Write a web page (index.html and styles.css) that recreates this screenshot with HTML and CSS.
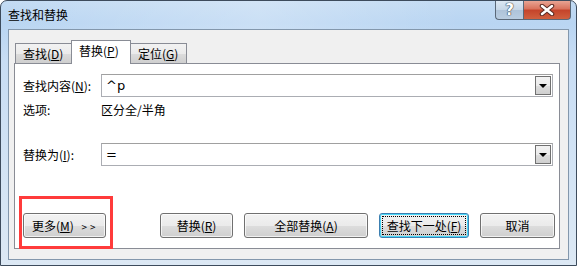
FILE: index.html
```html
<!DOCTYPE html>
<html lang="zh-CN">
<head>
    <meta charset="UTF-8">
    <title>查找和替换</title>
    <link rel="stylesheet" href="styles.css">
</head>
<body>
    <div class="window">
        <div class="titlebar">
            <span class="title">查找和替换</span>
            <div class="controls">
                <div class="ctl help">?</div>
                <div class="ctl close">
                    <svg width="16" height="12" viewBox="0 0 16 12">
                        <path d="M3 2 L13 10 M13 2 L3 10" stroke="#5a2a22" stroke-width="4.5" stroke-linecap="round"/>
                        <path d="M3 2 L13 10 M13 2 L3 10" stroke="#ffffff" stroke-width="2.5" stroke-linecap="round"/>
                    </svg>
                </div>
            </div>
        </div>

        <div class="client">
            <div class="tabs">
                <div class="tab first">查找(<u>D</u>)</div>
                <div class="tab active">替换(<u>P</u>)</div>
                <div class="tab">定位(<u>G</u>)</div>
            </div>

            <div class="panel">
                <div class="row">
                    <label class="label">查找内容(<u>N</u>):</label>
                    <div class="combo">
                        <span class="value">^p</span>
                        <span class="drop"><i></i></span>
                    </div>
                </div>
                <div class="row options">
                    <span class="label">选项:</span>
                    <span class="opt-text">区分全/半角</span>
                </div>
                <div class="row replace">
                    <label class="label">替换为(<u>I</u>):</label>
                    <div class="combo">
                        <span class="value">=</span>
                        <span class="drop"><i></i></span>
                    </div>
                </div>

                <div class="buttons">
                    <button class="btn more">更多(<u>M</u>) <span class="arrows">&gt;&gt;</span></button>
                    <button class="btn replace-one">替换(<u>R</u>)</button>
                    <button class="btn replace-all">全部替换(<u>A</u>)</button>
                    <button class="btn default"><span class="focus">查找下一处(<u>F</u>)</span></button>
                    <button class="btn cancel">取消</button>
                </div>
            </div>
        </div>
    </div>
</body>
</html>
```

FILE: styles.css
```css
html, body {
    margin: 0;
    padding: 0;
}

body {
    font-family: "Noto Sans CJK SC", "Noto Sans", sans-serif;
    font-size: 12px;
    color: #000;
    width: 577px;
    height: 266px;
    overflow: hidden;
    background: #fff;
}

.window {
    width: 575px;
    height: 264px;
    border: 1px solid #3d4b5c;
    border-radius: 7px 7px 0 0;
    background: linear-gradient(to bottom, #c3dbf3 0px, #b9d5f2 22px, #c8ddf4 60px, #d6e5f4 200px, #dce8f4 264px);
}

.titlebar {
    height: 28px;
    display: flex;
    justify-content: space-between;
    background: linear-gradient(to right, rgba(255,255,255,0) 0%, rgba(255,255,255,0.25) 45%, rgba(255,255,255,0) 80%);
    border-radius: 7px 7px 0 0;
}

.title {
    padding: 5px 0 0 7px;
    line-height: 18px;
    font-size: 12px;
}

.controls {
    display: flex;
    margin-right: 5px;
    height: 19px;
}

.ctl {
    height: 18px;
    border: 1px solid #5a6878;
    border-top: none;
    display: flex;
    align-items: center;
    justify-content: center;
}

.help {
    width: 27px;
    border-radius: 0 0 0 4px;
    border-right: none;
    background: linear-gradient(to bottom, #dce8f3 0%, #c6d6e6 50%, #aec3d9 51%, #b9cde1 100%);
    color: #fff;
    font-family: "DejaVu Sans", sans-serif;
    font-weight: bold;
    font-size: 15px;
    text-shadow: 0 0 1px #35424f, 0 0 1px #35424f, 0 0 1px #35424f;
}

.close {
    width: 46px;
    border-radius: 0 0 4px 0;
    background: linear-gradient(to bottom, #e8a493 0%, #d8715b 45%, #c4432a 50%, #d0603f 100%);
}

.client {
    margin: 0 7px;
    height: 229px;
    border: 1px solid #8397ac;
    background: #f0f0f0;
    display: flex;
    flex-direction: column;
}

.tabs {
    display: flex;
    align-items: flex-end;
    margin-top: 10px;
    padding-left: 6px;
    height: 23px;
}

.tab {
    height: 20px;
    line-height: 20px;
    padding: 0 7px;
    border: 1px solid #898c95;
    border-bottom: none;
    margin-left: -1px;
    background: linear-gradient(to bottom, #f2f2f2 0%, #ebebeb 50%, #dddddd 51%, #cfcfcf 100%);
    box-sizing: border-box;
    font-size: 12px;
}

.tab.first {
    margin-left: 0;
    width: 57px;
}

.tab.active {
    height: 24px;
    line-height: 20px;
    background: #fff;
    width: 60px;
    position: relative;
    top: 1px;
    z-index: 1;
}

.tab:last-child {
    width: 57px;
}

.panel {
    margin: 0 8px 0 5px;
    height: 186px;
    background: #fff;
    border: 1px solid #898c95;
    box-sizing: border-box;
    display: flex;
    flex-direction: column;
    padding: 10px 6px 0 8px;
}

.row {
    display: flex;
    align-items: center;
}

.label {
    width: 78px;
    flex: none;
}

.combo {
    flex: 1;
    height: 23px;
    border: 1px solid #abadb3;
    border-top-color: #a0a0a0;
    box-sizing: border-box;
    display: flex;
    align-items: center;
    justify-content: space-between;
}

.value {
    padding-left: 4px;
    font-family: "DejaVu Sans", sans-serif;
    font-size: 13px;
}

.drop {
    width: 16px;
    height: 19px;
    margin-right: 1px;
    border: 1px solid #707070;
    box-sizing: border-box;
    background: linear-gradient(to bottom, #f2f2f2 0%, #ebebeb 50%, #dddddd 51%, #cfcfcf 100%);
    display: flex;
    align-items: center;
    justify-content: center;
}

.drop i {
    display: block;
    width: 0;
    height: 0;
    border-left: 4px solid transparent;
    border-right: 4px solid transparent;
    border-top: 4px solid #000;
}

.options {
    margin-top: 4px;
    height: 16px;
}

.replace {
    margin-top: 26px;
}

.buttons {
    display: flex;
    align-items: center;
    margin-top: 47px;
}

.btn {
    height: 25px;
    border: 1px solid #707070;
    border-radius: 3px;
    background: linear-gradient(to bottom, #f2f2f2 0%, #ebebeb 50%, #dddddd 51%, #cfcfcf 100%);
    font-family: "Noto Sans CJK SC", "Noto Sans", sans-serif;
    font-size: 12px;
    color: #000;
    padding: 0;
    box-sizing: border-box;
    box-shadow: inset 0 0 0 1px rgba(255,255,255,0.7);
    flex: none;
}

.more {
    width: 83px;
    margin-right: 54px;
    text-align: left;
    padding-left: 8px;
    position: relative;
}

/* red highlight box drawn over the "more" button */
.more::after {
    content: "";
    position: absolute;
    left: -5px;
    top: -18px;
    width: 88px;
    height: 47px;
    border: 3px solid #ff3b3b;
}

.arrows {
    letter-spacing: 3px;
    margin-left: 5px;
    font-size: 10px;
}

.replace-one {
    width: 73px;
    margin-right: 11px;
}

.replace-all {
    width: 124px;
    margin-right: 11px;
}

.default {
    width: 90px;
    margin-right: 11px;
    border-color: #3c7fb1;
    box-shadow: inset 0 0 0 1px #48d8f8;
    padding: 2px;
}

.focus {
    display: flex;
    align-items: center;
    justify-content: center;
    height: 100%;
    border: 1px dotted #000;
    box-sizing: border-box;
}

.cancel {
    width: 75px;
}
```
